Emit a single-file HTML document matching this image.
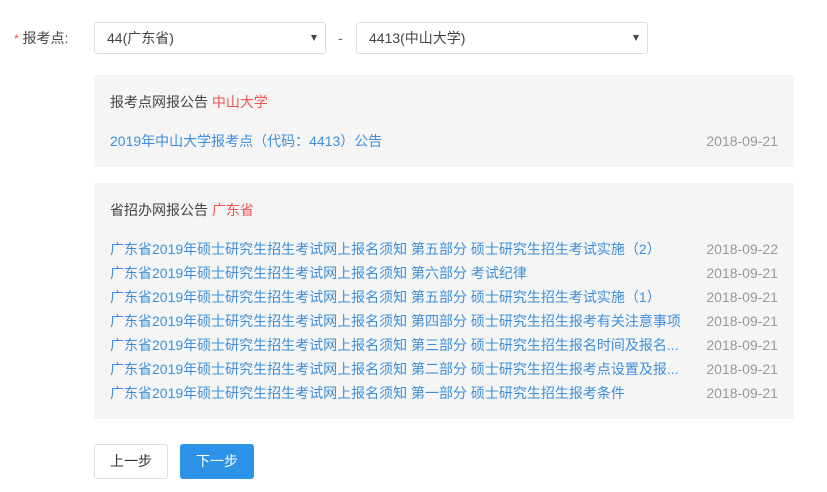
<!DOCTYPE html>
<html><head><meta charset="utf-8"><style>
*{margin:0;padding:0;box-sizing:border-box}
body{width:827px;height:492px;background:#fff;font-family:"Liberation Sans","Noto Sans CJK SC",sans-serif;font-size:14px;color:#444;position:relative;overflow:hidden}
.abs{position:absolute}
.sel{position:absolute;top:22px;height:32px;border:1px solid #ddd;border-radius:3px;padding-left:12px;line-height:30px;color:#444;font-size:14px}
.sel:after{content:"";position:absolute;right:8px;top:12px;border-left:3px solid transparent;border-right:3px solid transparent;border-top:6px solid #444}
.panel{position:absolute;left:94px;width:700px;background:#f5f5f5}
.t{position:absolute;left:16px}
.row{position:absolute;left:16px;right:16px;height:20px;line-height:20px}
.row a{color:#3d8fdb;text-decoration:none}
.row span{position:absolute;right:0;color:#999}
.red{color:#f0524f}
.btn{position:absolute;top:444px;height:35px;width:74px;border-radius:3px;text-align:center;line-height:33px;font-size:14px}
</style></head><body>
<div class="abs" style="left:14px;top:29px;line-height:18px"><span class="red" style="font-size:12px">*</span> 报考点:</div>
<div class="sel" style="left:94px;width:232px">44(广东省)</div>
<div class="abs" style="left:338px;top:29px;line-height:18px;color:#666">-</div>
<div class="sel" style="left:356px;width:292px">4413(中山大学)</div>
<div class="panel" style="top:75px;height:92px">
<div class="t" style="top:17px">报考点网报公告 <span class="red">中山大学</span></div>
<div class="row" style="top:56px"><a>2019年中山大学报考点（代码：4413）公告</a><span>2018-09-21</span></div>
</div>
<div class="panel" style="top:183px;height:236px">
<div class="t" style="top:17px">省招办网报公告 <span class="red">广东省</span></div>
<div class="row" style="top:56px"><a>广东省2019年硕士研究生招生考试网上报名须知 第五部分 硕士研究生招生考试实施（2）</a><span>2018-09-22</span></div>
<div class="row" style="top:80px"><a>广东省2019年硕士研究生招生考试网上报名须知 第六部分 考试纪律</a><span>2018-09-21</span></div>
<div class="row" style="top:104px"><a>广东省2019年硕士研究生招生考试网上报名须知 第五部分 硕士研究生招生考试实施（1）</a><span>2018-09-21</span></div>
<div class="row" style="top:128px"><a>广东省2019年硕士研究生招生考试网上报名须知 第四部分 硕士研究生招生报考有关注意事项</a><span>2018-09-21</span></div>
<div class="row" style="top:152px"><a>广东省2019年硕士研究生招生考试网上报名须知 第三部分 硕士研究生招生报名时间及报名...</a><span>2018-09-21</span></div>
<div class="row" style="top:176px"><a>广东省2019年硕士研究生招生考试网上报名须知 第二部分 硕士研究生招生报考点设置及报...</a><span>2018-09-21</span></div>
<div class="row" style="top:200px"><a>广东省2019年硕士研究生招生考试网上报名须知 第一部分 硕士研究生招生报考条件</a><span>2018-09-21</span></div>
</div>
<div class="btn" style="left:94px;border:1px solid #ddd;color:#333">上一步</div>
<div class="btn" style="left:180px;background:#2d93e6;color:#fff;border:1px solid #2d93e6">下一步</div>
</body></html>
